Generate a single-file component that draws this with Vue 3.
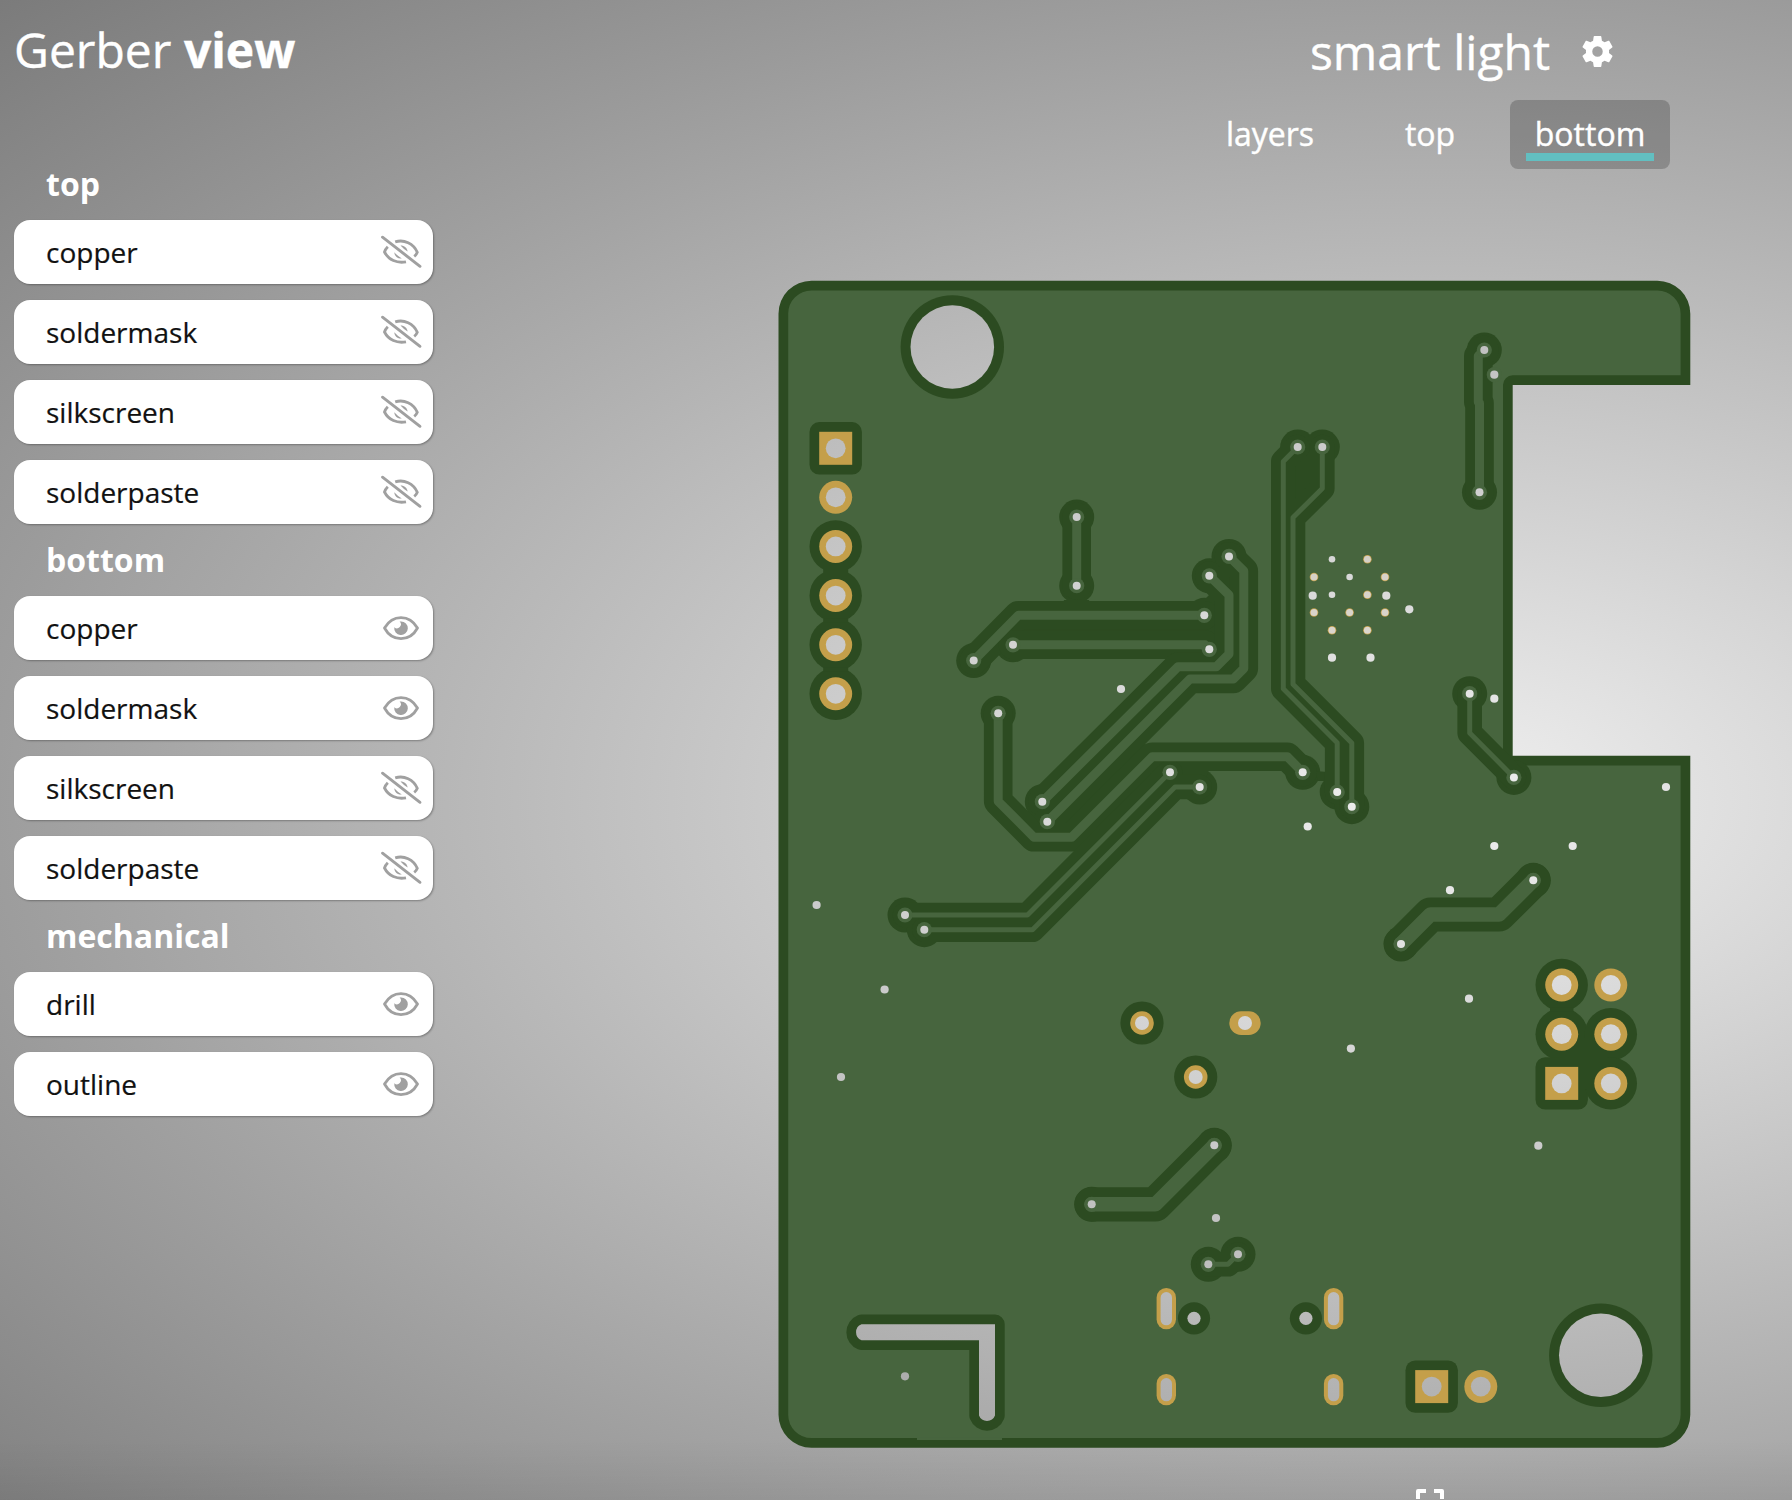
<script setup>
const groups = [
  {
    name: 'top',
    layers: [
      { name: 'copper', visible: false },
      { name: 'soldermask', visible: false },
      { name: 'silkscreen', visible: false },
      { name: 'solderpaste', visible: false },
    ],
  },
  {
    name: 'bottom',
    layers: [
      { name: 'copper', visible: true },
      { name: 'soldermask', visible: true },
      { name: 'silkscreen', visible: false },
      { name: 'solderpaste', visible: false },
    ],
  },
  {
    name: 'mechanical',
    layers: [
      { name: 'drill', visible: true },
      { name: 'outline', visible: true },
    ],
  },
]

const tabs = ['layers', 'top', 'bottom']
const activeTab = 'bottom'

const CLEARANCE = 9.8

const outline =
  'M812 280.7H1657.3A33 33 0 0 1 1690.3 313.7V385H1512.7V755.7H1690.3V1414.7A33 33 0 0 1 1657.3 1447.7H811.5A33 33 0 0 1 778.5 1414.7V313.7A33 33 0 0 1 811.5 280.7Z'

const slot =
  'M861.5 1324.3H995V1415.5A8.6 8.6 0 0 1 979 1415.5V1340.3H861.5A8.6 8.6 0 0 1 861.5 1324.3Z'

const tracks = [
  { w: 9, p: '1076.7,517 1076.7,585.7' },
  { w: 9, p: '973.7,660.6 1018.3,615.3 1204.3,615.3' },
  { w: 9, p: '1013,644.8 1205,644.8 1209.3,649.3' },
  { w: 9, p: '1209.3,575.8 1229,595 1229,654 1216.3,666.7 1178,666.7 1042.3,801.7' },
  { w: 9, p: '1229,556.4 1243.8,571 1243.8,668.5 1233.3,679 1190,679 1047.3,821.7' },
  { w: 9, p: '998.2,713.3 998.2,801.3 1034,837.3 1071.7,837.3 1152.3,756.7 1287.3,756.7 1302.7,772.3' },
  { w: 5, p: '905,915 1027.5,915 1170,772.3' },
  { w: 5, p: '924.3,929.7 1032.5,929.7 1175,787 1199.7,787' },
  { w: 5, p: '1297.7,447 1283.3,461.5 1283.3,688.7 1337.2,742.7 1337.2,792' },
  { w: 5, p: '1322.3,447 1322.3,488.5 1293,517.5 1293,684.3 1351.8,743 1351.8,806.7' },
  { w: 9, p: '1484.3,350 1478.3,356 1478.3,402 1479.5,403 1479.5,492.3' },
  { w: 5, p: '1469.7,693.7 1469.7,733 1513.9,777.4' },
  { w: 14.6, p: '1401,944 1430.5,914.5 1499,914.5 1533.3,880.3' },
  { w: 14.6, p: '1091.7,1204.3 1155.3,1204.3 1214.3,1145.3' },
  { w: 5, p: '1208.3,1264.3 1228,1264.3 1238,1254.3' },
]

// Vias isolated from the ground pour
const vias = [
  [1076.7, 517], [1076.7, 585.7], [973.7, 660.6], [1204.3, 615.3], [1013, 644.8],
  [1209.3, 649.3], [1209.3, 575.8], [1042.3, 801.7], [1229, 556.4], [1047.3, 821.7],
  [998.2, 713.3], [1302.7, 772.3], [905, 915], [1170, 772.3], [924.3, 929.7],
  [1199.7, 787], [1297.7, 447], [1337.2, 792], [1322.3, 447], [1351.8, 806.7],
  [1484.3, 350], [1479.5, 492.3], [1469.7, 693.7], [1513.9, 777.4], [1401, 944],
  [1533.3, 880.3], [1091.7, 1204.3], [1214.3, 1145.3], [1208.3, 1264.3], [1238, 1254.3],
]

// Vias connected to the ground pour
const groundVias = [
  [1494.3, 374.7], [1494.3, 698.7], [1332, 657.7], [1370.5, 657.7], [1409.3, 609.3],
  [1312.7, 595.7], [1386.3, 595.7], [1121, 689], [1307.7, 826.5], [1494.3, 846],
  [1572.7, 846], [1450, 890.2], [1666, 787], [1469, 998.7], [816.6, 905],
  [884.6, 989.5], [841, 1077], [1350.9, 1048.6], [1538.3, 1145.7], [1216, 1218],
  [905, 1376.3],
]

const smallVias = [[1332, 559.2], [1349.6, 577], [1332, 594.7]]

const thermalVias = [
  [1367.4, 559.2], [1314, 577], [1385, 577], [1367.4, 594.7], [1314, 612.5],
  [1349.6, 612.5], [1385, 612.5], [1332, 630.2], [1367.4, 630.2],
]

const pads = [
  { x: 835.7, y: 448.3, square: true, iso: true },
  { x: 835.7, y: 497.3 },
  { x: 835.7, y: 546.4, iso: true },
  { x: 835.7, y: 595.6, iso: true },
  { x: 835.7, y: 644.8, iso: true },
  { x: 835.7, y: 693.8, iso: true },
  { x: 1561.7, y: 985, iso: true },
  { x: 1610.8, y: 985 },
  { x: 1561.7, y: 1034.2, iso: true },
  { x: 1610.8, y: 1034.2, iso: true },
  { x: 1561.7, y: 1083.4, square: true, iso: true },
  { x: 1610.8, y: 1083.4, iso: true },
  { x: 1431.7, y: 1386.6, square: true, iso: true },
  { x: 1480.8, y: 1386.6 },
]

const mounting = [[952.3, 347], [1600.8, 1355.3]]
const pegs = [[1194, 1318.3], [1305.9, 1318.3]]
const ledPads = [[1142, 1023], [1195.7, 1077]]
const usbSlots = [
  { x: 1166.3, y: 1288, h: 41.3 },
  { x: 1333.6, y: 1288, h: 41.3 },
  { x: 1166.3, y: 1374, h: 31.3 },
  { x: 1333.6, y: 1374, h: 31.3 },
]

// Dark areas where the pour does not reach between neighbouring nets
const voids = [
  '1286,459 1297,447 1322,447 1322,488 1293,517 1284,517',
  '1018,620 1209,620 1209,640 1013,640',
  '1200,604 1212,592 1229,585 1229,660 1216,667 1176,667 1182,650 1200,640',
  '1209,576 1222,560 1240,572 1240,600 1225,600',
  '1225,652 1240,652 1240,670 1225,678',
  '1042,802 1047,822 1034,837 1071,837 1152,757 1146,746 1140,730',
  '1150,765 1211,765 1205,780 1175,788 1160,780',
  '1315,771 1328,772 1328,781 1318,781',
  '1565,1050 1586,1036 1607,1050 1607,1068 1586,1090 1565,1068',
  '1550,1007.5 1573.4,1007.5 1573.4,1011.7 1550,1011.7',
  '1064,600 1089,600 1091,606 1062,606',
  '823.2,569 848.2,569 848.2,573 823.2,573',
  '823.2,618.2 848.2,618.2 848.2,622.2 823.2,622.2',
  '823.2,667.3 848.2,667.3 848.2,671.3 823.2,671.3',
]
</script>

<template>
  <div class="page">
    <aside class="sidebar">
      <h1 class="brand">Gerber <b>view</b></h1>
      <section v-for="group in groups" :key="group.name" class="group">
        <h2 class="group-title">{{ group.name }}</h2>
        <ul class="layer-list">
          <li v-for="layer in group.layers" :key="layer.name" class="layer">
            <span>{{ layer.name }}</span>
            <svg v-if="layer.visible" class="eye" viewBox="0 0 44 36">
              <path d="M5.5 18C9 12 15 7.6 22 7.6S35 12 38.500 18C35 24.500 29 28.600 22 28.600S9 24.500 5.500 18Z" fill="none" stroke="#a0a0a0" stroke-width="2.8" stroke-linejoin="round" />
              <path d="M22 11.400A6.800 6.800 0 1 1 15.300 17.200A3.600 3.600 0 0 0 20.600 11.600A6.800 6.800 0 0 1 22 11.400Z" fill="#a0a0a0" />
            </svg>
            <svg v-else class="eye" viewBox="0 0 44 36">
              <g fill="none" stroke="#a0a0a0" stroke-width="2.8" stroke-linecap="butt">
                <path d="M3.500 3.200L41 32.300" stroke-width="2.900" stroke-linecap="round" />
                <path d="M16.200 7.900C25 5 34.500 9.500 38.300 18.200Q37.300 20.800 35.200 22.400" />
                <path d="M8.800 12.700Q6.300 15.200 5.500 18C9.500 26 18 29.500 27 27.800" />
              </g>
              <path d="M21.500 11.500C25.500 11.500 28.200 14 28.600 17.600Q25.500 16 21.500 11.500Z" fill="#a0a0a0" />
              <path d="M15.300 18.200Q18.500 22 22.800 24.400C18.500 25 15.500 22.300 15.300 18.200Z" fill="#a0a0a0" />
            </svg>
          </li>
        </ul>
      </section>
    </aside>

    <main class="stage">
      <header class="project">
        <div class="project-row">
          <h2 class="project-name">smart light</h2>
          <svg class="gear" viewBox="0 0 24 24">
            <path fill="#fff" d="M19.430 12.980c.04-.32.07-.64.07-.98s-.03-.66-.07-.98l2.110-1.650c.19-.15.24-.42.12-.64l-2-3.460c-.12-.22-.39-.3-.61-.22l-2.490 1c-.52-.4-1.080-.73-1.690-.98l-.38-2.650C14.460 2.180 14.250 2 14 2h-4c-.25 0-.46.18-.49.42l-.38 2.650c-.61.25-1.170.59-1.690.98l-2.490-1c-.23-.09-.49 0-.61.22l-2 3.460c-.13.22-.07.49.12.64l2.110 1.650c-.04.32-.07.65-.07.98s.03.66.07.98l-2.110 1.650c-.19.15-.24.42-.12.64l2 3.460c.12.22.39.3.61.22l2.490-1c.52.4 1.080.73 1.690.98l.38 2.650c.03.24.24.42.49.42h4c.25 0 .46-.18.49-.42l.38-2.650c.61-.25 1.170-.59 1.690-.98l2.490 1c.23.09.49 0 .61-.22l2-3.460c.12-.22.07-.49-.12-.64l-2.110-1.650zM12 15.400a3.400 3.400 0 1 1 0-6.800a3.400 3.400 0 0 1 0 6.800z" />
          </svg>
        </div>
        <nav class="tabs">
          <a v-for="tab in tabs" :key="tab" class="tab" :class="{ active: tab === activeTab }">
            <span class="tab-label">{{ tab }}</span>
          </a>
        </nav>
      </header>

      <svg class="board" viewBox="778 280 913 1168">
        <defs>
          <clipPath id="edge"><path :d="outline" /></clipPath>
          <mask id="drill" maskUnits="userSpaceOnUse" x="778" y="280" width="913" height="1168">
            <rect x="778" y="280" width="913" height="1168" fill="#fff" />
            <g fill="#000">
              <circle v-for="(m, i) in mounting" :key="'m' + i" :cx="m[0]" :cy="m[1]" r="41.8" />
              <circle v-for="(m, i) in pegs" :key="'g' + i" :cx="m[0]" :cy="m[1]" r="6.600" />
              <circle v-for="(m, i) in ledPads" :key="'l' + i" :cx="m[0]" :cy="m[1]" r="7" />
              <circle cx="1245" cy="1023" r="7" />
              <circle v-for="(p, i) in pads" :key="'p' + i" :cx="p.x" :cy="p.y" r="9.900" />
              <rect v-for="(s, i) in usbSlots" :key="'u' + i" :x="s.x - 5.7" :y="s.y + 4" width="11.400" :height="s.h - 8" rx="5.700" />
              <path :d="slot" />
              <circle v-for="(v, i) in vias" :key="'v' + i" :cx="v[0]" :cy="v[1]" r="4" />
              <circle v-for="(v, i) in groundVias" :key="'gv' + i" :cx="v[0]" :cy="v[1]" r="4.100" />
              <circle v-for="(v, i) in smallVias" :key="'s' + i" :cx="v[0]" :cy="v[1]" r="3.300" />
            </g>
            <g fill="#1c1c1c">
              <circle v-for="(v, i) in thermalVias" :key="'t' + i" :cx="v[0]" :cy="v[1]" r="3.500" />
            </g>
          </mask>
        </defs>
        <g clip-path="url(#edge)">
          <g mask="url(#drill)">
            <path :d="outline" class="pour edge" stroke-width="19.400" />
            <rect x="917" y="1437.500" width="85" height="2.500" class="pour" />

            <g class="void" stroke-linejoin="round" stroke-linecap="round">
              <circle v-for="(m, i) in mounting" :key="'m' + i" :cx="m[0]" :cy="m[1]" r="51.700" />
              <circle v-for="(m, i) in pegs" :key="'g' + i" :cx="m[0]" :cy="m[1]" r="16.100" />
              <circle v-for="(m, i) in ledPads" :key="'l' + i" :cx="m[0]" :cy="m[1]" r="21.600" />
              <path :d="slot" class="ring" stroke-width="19.400" />
              <template v-for="(p, i) in pads" :key="'p' + i">
                <rect v-if="p.iso && p.square" :x="p.x - 26.2" :y="p.y - 26.2" width="52.400" height="52.400" rx="9.800" />
                <circle v-else-if="p.iso" :cx="p.x" :cy="p.y" r="26.200" />
              </template>
              <circle v-for="(v, i) in vias" :key="'v' + i" :cx="v[0]" :cy="v[1]" r="17.500" />
              <polygon v-for="(v, i) in voids" :key="'x' + i" :points="v" />
              <polyline v-for="(t, i) in tracks" :key="'t' + i" class="line" :points="t.p" :stroke-width="t.w + CLEARANCE * 2" />
            </g>

            <g class="copper" stroke-linejoin="round" stroke-linecap="round">
              <polyline v-for="(t, i) in tracks" :key="'t' + i" class="line" :points="t.p" :stroke-width="t.w" />
              <circle v-for="(v, i) in vias" :key="'v' + i" :cx="v[0]" :cy="v[1]" r="7.600" />
              <circle cx="1494.300" cy="374.700" r="7.600" />
            </g>

            <g class="gold">
              <template v-for="(p, i) in pads" :key="'p' + i">
                <rect v-if="p.square" :x="p.x - 16.5" :y="p.y - 16.5" width="33" height="33" />
                <circle v-else :cx="p.x" :cy="p.y" r="16.500" />
              </template>
              <circle v-for="(m, i) in ledPads" :key="'l' + i" :cx="m[0]" :cy="m[1]" r="11.800" />
              <rect x="1229.300" y="1011.200" width="31.400" height="23.700" rx="11.850" />
              <rect v-for="(s, i) in usbSlots" :key="'u' + i" :x="s.x - 9.7" :y="s.y" width="19.400" :height="s.h" rx="9.700" />
              <circle v-for="(v, i) in thermalVias" :key="'t' + i" :cx="v[0]" :cy="v[1]" r="4.300" />
            </g>
          </g>
        </g>
      </svg>

      <svg class="fit" viewBox="0 0 28 28">
        <path d="M2 10V2H10M18 2H26V10M26 18V26H18M10 26H2V18" fill="none" stroke="#fff" stroke-width="4" stroke-linejoin="round" />
      </svg>
    </main>
  </div>
</template>

<style>
body {
  margin: 0;
  overflow: hidden;
}
</style>

<style scoped>
.page {
  display: flex;
  width: 1792px;
  height: 1500px;
  overflow: hidden;
  color: #fff;
  font-family: 'Open Sans', 'Noto Sans', sans-serif;
  background:
    linear-gradient(to bottom, transparent 1440px, rgba(0, 0, 0, 0.06) 1500px),
    radial-gradient(2028px 1131px at 1434px 800px, #f0f0f0 0%, #7b7b7b 100%);
}

h1,
h2,
ul {
  margin: 0;
  padding: 0;
}

.sidebar {
  box-sizing: border-box;
  flex: none;
  width: 448px;
  padding: 0 15px 0 14px;
}

.brand {
  height: 148px;
  font-size: 48px;
  font-weight: 400;
  line-height: 100px;
  white-space: nowrap;
  -webkit-text-stroke: 0.4px #fff;
}

.brand b {
  font-weight: 700;
}

.group-title {
  height: 72px;
  padding-left: 32px;
  font-size: 32px;
  font-weight: 700;
  line-height: 72px;
}

.layer-list {
  display: flex;
  flex-direction: column;
  gap: 16px;
  list-style: none;
}

.layer {
  box-sizing: border-box;
  display: flex;
  align-items: center;
  justify-content: space-between;
  height: 64px;
  padding: 0 10px 0 32px;
  border-radius: 16px;
  background: #fff;
  box-shadow: 1px 1px 2px rgba(0, 0, 0, 0.3);
  color: #111;
  font-size: 28px;
  line-height: 64px;
  -webkit-text-stroke: 0.2px #111;
}

.eye {
  width: 44px;
  height: 36px;
}

.stage {
  display: flex;
  flex: none;
  flex-direction: column;
  width: 1344px;
}

.project {
  flex: none;
  width: 480px;
  height: 280px;
  margin-left: 742px;
  -webkit-text-stroke: 0.4px #fff;
}

.project-row {
  display: grid;
  grid-template-columns: 1fr auto 1fr;
  align-items: center;
  height: 100px;
}

.project-name {
  grid-column: 2;
  font-size: 48px;
  font-weight: 400;
  line-height: 104px;
}

.gear {
  width: 37px;
  height: 37px;
  margin: 0 0 2px 29px;
}

.tabs {
  display: grid;
  grid-template-columns: repeat(3, 160px);
  height: 69px;
}

.tab {
  display: flex;
  justify-content: center;
  border-radius: 8px;
}

.tab.active {
  background: rgba(0, 0, 0, 0.2);
}

.tab-label {
  box-sizing: border-box;
  height: 61px;
  padding: 0 9px;
  border-bottom: 8px solid transparent;
  font-size: 32px;
  line-height: 68px;
}

.active .tab-label {
  border-bottom-color: #62bfc1;
}

.board {
  flex: none;
  width: 913px;
  height: 1168px;
  margin-left: 330px;
}

.pour {
  fill: #47653e;
}

.edge,
.void .ring {
  stroke: #2c4b21;
}

.edge {
  stroke-linejoin: round;
}

.void {
  fill: #2c4b21;
  stroke: none;
}

.void .line {
  fill: none;
  stroke: #2c4b21;
}

.copper {
  fill: #47653e;
}

.copper .line {
  fill: none;
  stroke: #47653e;
}

.gold {
  fill: #c49f4a;
}

.fit {
  flex: none;
  width: 28px;
  height: 28px;
  margin: 41px 0 0 968px;
}
</style>
